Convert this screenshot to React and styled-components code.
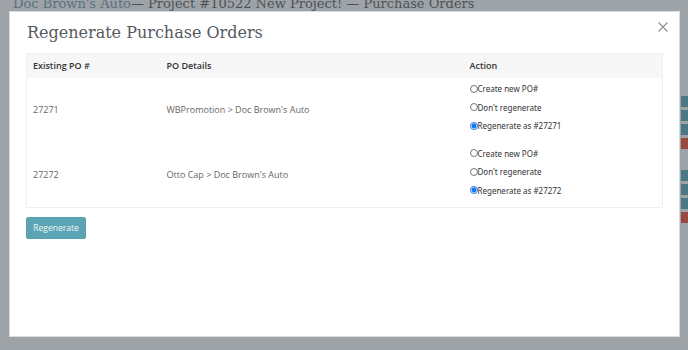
import React from "react";
import styled, { createGlobalStyle } from "styled-components";

const Global = createGlobalStyle`
  html, body { margin: 0; padding: 0; }
  body { width: 688px; height: 350px; overflow: hidden; background: #9ea3a7; }
  * { box-sizing: border-box; }
`;

const Page = styled.div`
  position: relative;
  width: 688px;
  height: 350px;
  overflow: hidden;
  background: #9ea3a7;
  display: grid;
  grid-template-columns: 1fr 7px;
  grid-template-rows: 20px 1fr;
`;

const BgHeader = styled.div`
  font-family: "DejaVu Serif", serif;
  font-size: 13px;
  color: #4d5257;
  padding: 0 0 0 13px;
  margin-top: -4px;
  white-space: nowrap;
  grid-column: 1 / 3;
  grid-row: 1;
  height: 20px;
`;

const BgLink = styled.span`
  color: #5b7080;
`;

const SideBars = styled.div`
  grid-column: 2;
  grid-row: 2;
  display: flex;
  flex-direction: column;
  gap: 3px;
  padding-top: 76px;
`;

const SideBar = styled.div`
  height: ${(p) => p.$h || 11}px;
  margin-top: ${(p) => p.$gap || 0}px;
  background: ${(p) => (p.$red ? "#99493f" : "#4a7886")};
`;

const Modal = styled.div`
  position: absolute;
  left: 9px;
  top: 11px;
  width: 671px;
  height: 326px;
  background: #fff;
  border: 1px solid #d9dcde;
  padding: 0 17px 0 16px;
  display: flex;
  flex-direction: column;
`;

const ModalHead = styled.div`
  display: flex;
  justify-content: space-between;
  align-items: flex-start;
  padding: 10px 0 0 1px;
  height: 41px;
`;

const Title = styled.h3`
  margin: 0;
  font-family: "DejaVu Serif", serif;
  font-weight: 300;
  font-size: 16px;
  line-height: 22px;
  color: #555a5e;
`;

const Close = styled.button`
  border: 0;
  background: none;
  padding: 0;
  margin: -1px -7px 0 0;
  width: 12px;
  height: 12px;
  cursor: pointer;
  display: flex;
`;

const Table = styled.table`
  width: 637px;
  border-collapse: collapse;
  border: 1px solid #f0f0f0;
  font-family: "Open Sans", sans-serif;
  font-size: 9px;
  color: #666;
`;

const Th = styled.th`
  text-align: left;
  font-weight: 600;
  color: #333;
  background: #f7f7f7;
  height: 24px;
  padding: 0 6px;
  width: ${(p) => p.$w}px;
`;

const Td = styled.td`
  padding: 0 6px;
  height: 64px;
  vertical-align: middle;
`;

const ActionCell = styled.td`
  padding: 2px 6px 7px 6px;
  height: 64px;
  vertical-align: top;
`;

const Option = styled.label`
  display: flex;
  align-items: center;
  height: 18.5px;
  font-family: "Noto Sans", sans-serif;
  font-size: 8px;
  color: #333;
`;

const Radio = styled.input`
  width: 8px;
  height: 8px;
  margin: 0;
  accent-color: #1a73e8;
`;

const Button = styled.button`
  margin-top: 9px;
  align-self: flex-start;
  width: 60px;
  height: 22px;
  background: #5ba4b4;
  border: 1px solid #56a0b0;
  border-radius: 2px;
  color: #f2f8fa;
  font-family: "Open Sans", sans-serif;
  font-size: 8.5px;
  padding: 0;
`;

const rows = [
  { po: "27271", details: "WBPromotion > Doc Brown's Auto" },
  { po: "27272", details: "Otto Cap > Doc Brown's Auto" },
];

export default function App() {
  return (
    <>
      <Global />
      <Page>
        <BgHeader>
          <BgLink>Doc Brown's Auto</BgLink>— Project #10522 New Project! — Purchase Orders
        </BgHeader>
        <SideBars>
          <SideBar />
          <SideBar />
          <SideBar />
          <SideBar $red />
          <SideBar $gap={18} />
          <SideBar />
          <SideBar />
          <SideBar $red />
        </SideBars>
        <Modal>
          <ModalHead>
            <Title>Regenerate Purchase Orders</Title>
            <Close aria-label="Close">
              <svg width="12" height="12" viewBox="0 0 12 12">
                <path d="M1.5 1.5 L10.5 10.5 M10.5 1.5 L1.5 10.5" stroke="#8a8f93" strokeWidth="1.1" fill="none" />
              </svg>
            </Close>
          </ModalHead>
          <Table>
            <thead>
              <tr>
                <Th $w={134}>Existing PO #</Th>
                <Th $w={303}>PO Details</Th>
                <Th>Action</Th>
              </tr>
            </thead>
            <tbody>
              {rows.map((r) => (
                <tr key={r.po}>
                  <Td>{r.po}</Td>
                  <Td>{r.details}</Td>
                  <ActionCell>
                    <Option><Radio type="radio" name={r.po} />Create new PO#</Option>
                    <Option><Radio type="radio" name={r.po} />Don't regenerate</Option>
                    <Option><Radio type="radio" name={r.po} defaultChecked />Regenerate as #{r.po}</Option>
                  </ActionCell>
                </tr>
              ))}
            </tbody>
          </Table>
          <Button>Regenerate</Button>
        </Modal>
      </Page>
    </>
  );
}
